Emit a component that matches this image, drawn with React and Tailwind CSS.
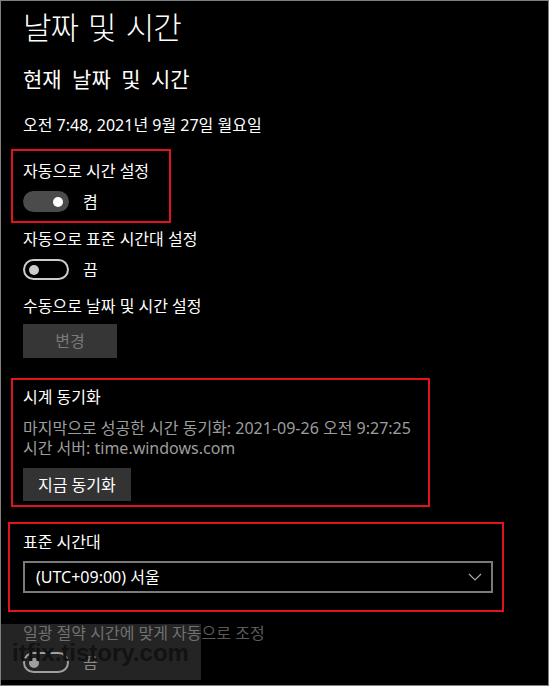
const font = "font-['Noto_Sans','Noto_Sans_CJK_KR',sans-serif]";

function Toggle({ on, muted }) {
  if (on) {
    return (
      <div className="w-[46px] h-[21px] rounded-full bg-[#4b4b4b] flex items-center justify-end pr-[6px]">
        <div className="w-[10px] h-[10px] rounded-full bg-white" />
      </div>
    );
  }
  const c = muted ? "border-[#8f8f8f]" : "border-[#cccccc]";
  const k = muted ? "bg-[#8f8f8f]" : "bg-[#cccccc]";
  return (
    <div className={`w-[46px] h-[21px] rounded-full border-2 ${c} flex items-center pl-[4px]`}>
      <div className={`w-[10px] h-[10px] rounded-full ${k}`} />
    </div>
  );
}

function ToggleRow({ on, label, muted }) {
  return (
    <div className="flex items-center gap-[14px]">
      <Toggle on={on} muted={muted} />
      <span className={`text-[16px] leading-[20px] ${muted ? "text-[#777777]" : "text-white"}`}>
        {label}
      </span>
    </div>
  );
}

export default function App() {
  return (
    <div
      className={`relative w-[549px] h-[686px] bg-black border border-[#7f7f7f] overflow-hidden text-white ${font}`}
    >
      <div className="flex flex-col items-start pl-[22px]">
        {/* 제목 */}
        <h1 className="mt-[7px] text-[31px] leading-[38px] tracking-[-1px] [word-spacing:3px] font-light">
          날짜 및 시간
        </h1>
        <h2 className="mt-[19px] text-[21px] leading-[28px] [word-spacing:5px]">
          현재 날짜 및 시간
        </h2>
        <p className="mt-[22px] text-[16px] leading-[20px]">
          오전 7:48, 2021년 9월 27일 월요일
        </p>

        {/* 자동 시간 */}
        <div className="mt-[14px] -ml-[12px] w-[160px] border-2 border-[#e3131b] pl-[10px] pt-[10px] pb-[9px]">
          <p className="text-[16px] leading-[20px]">자동으로 시간 설정</p>
          <div className="mt-[10px]">
            <ToggleRow on label="켬" />
          </div>
        </div>

        <p className="mt-[6px] text-[16px] leading-[20px]">자동으로 표준 시간대 설정</p>
        <div className="mt-[10px]">
          <ToggleRow label="끔" />
        </div>

        <p className="mt-[16px] text-[16px] leading-[20px]">수동으로 날짜 및 시간 설정</p>
        <button className="mt-[8px] w-[94px] h-[34px] bg-[#363636] text-[#7a7a7a] text-[16px]">
          변경
        </button>

        {/* 시계 동기화 */}
        <div className="mt-[20px] -ml-[12px] w-[419px] border-2 border-[#e3131b] pl-[10px] pt-[7px] pb-[4px]">
          <p className="text-[16px] leading-[20px]">시계 동기화</p>
          <div className="mt-[11px] text-[16px] leading-[20px] text-[#9d9d9d]">
            <p>마지막으로 성공한 시간 동기화: 2021-09-26 오전 9:27:25</p>
            <p>시간 서버: time.windows.com</p>
          </div>
          <button className="mt-[10px] h-[33px] px-[15px] bg-[#333333] text-white text-[16px]">
            지금 동기화
          </button>
        </div>

        {/* 표준 시간대 */}
        <div className="mt-[15px] -ml-[15px] w-[496px] border-2 border-[#e3131b] pl-[13px] pt-[8px] pb-[17px]">
          <p className="text-[16px] leading-[20px]">표준 시간대</p>
          <div className="mt-[9px] w-[470px] h-[32px] border-2 border-[#7a7a7a] flex items-center justify-between pl-[11px] pr-[9px]">
            <span className="text-[16px] leading-[20px]">(UTC+09:00) 서울</span>
            <svg width="14" height="8" viewBox="0 0 14 8" fill="none">
              <path d="M1 1 L7 7 L13 1" stroke="#a8a8a8" strokeWidth="1.2" />
            </svg>
          </div>
        </div>

        <p className="mt-[11px] text-[16px] leading-[20px] text-[#5a5a5a]">
          일광 절약 시간에 맞게 자동으로 조정
        </p>
        <div className="mt-[9px]">
          <ToggleRow label="끔" muted />
        </div>
      </div>

      {/* 워터마크 */}
      <div className="absolute left-0 top-[623px] w-[200px] h-[56px] bg-white/[0.14] flex items-center pl-[11px] pt-[2px]">
        <span className="font-['Liberation_Sans',Arial,sans-serif] font-bold text-[24px] leading-none text-[#121212]">
          itfix.tistory.com
        </span>
      </div>
    </div>
  );
}
